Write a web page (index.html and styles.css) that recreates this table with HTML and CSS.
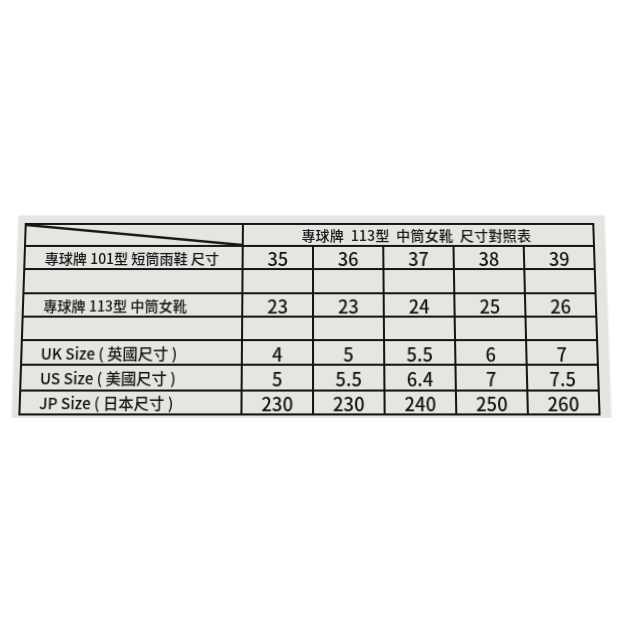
FILE: index.html
```html
<!DOCTYPE html>
<html lang="zh-Hant">
<head>
<meta charset="utf-8">
<title>尺寸對照表</title>
<link rel="stylesheet" href="styles.css">
</head>
<body>
<div class="page">
  <div class="paper">
    <div class="chart">
      <div class="cell corner">
        <svg class="diag" viewBox="0 0 100 100" preserveAspectRatio="none"><line x1="0" y1="0" x2="100" y2="100" stroke="#151515" stroke-width="2.4" vector-effect="non-scaling-stroke"/></svg>
      </div>
      <div class="cell title">專球牌&nbsp; 113型&nbsp; 中筒女靴&nbsp; 尺寸對照表</div>

      <div class="cell label">專球牌 101型 短筒雨鞋 尺寸</div>
      <div class="cell num">35</div><div class="cell num">36</div><div class="cell num">37</div><div class="cell num">38</div><div class="cell num">39</div>

      <div class="cell label"></div>
      <div class="cell num"></div><div class="cell num"></div><div class="cell num"></div><div class="cell num"></div><div class="cell num"></div>

      <div class="cell label">專球牌 113型 中筒女靴</div>
      <div class="cell num">23</div><div class="cell num">23</div><div class="cell num">24</div><div class="cell num">25</div><div class="cell num">26</div>

      <div class="cell label"></div>
      <div class="cell num"></div><div class="cell num"></div><div class="cell num"></div><div class="cell num"></div><div class="cell num"></div>

      <div class="cell label size">UK Size ( 英國尺寸 )</div>
      <div class="cell num">4</div><div class="cell num">5</div><div class="cell num">5.5</div><div class="cell num">6</div><div class="cell num">7</div>

      <div class="cell label size">US Size ( 美國尺寸 )</div>
      <div class="cell num">5</div><div class="cell num">5.5</div><div class="cell num">6.4</div><div class="cell num">7</div><div class="cell num">7.5</div>

      <div class="cell label size">JP Size ( 日本尺寸 )</div>
      <div class="cell num">230</div><div class="cell num">230</div><div class="cell num">240</div><div class="cell num">250</div><div class="cell num">260</div>
    </div>
  </div>
</div>
</body>
</html>
```
FILE: styles.css
```css
html, body {
  margin: 0;
  padding: 0;
  background: #ffffff;
}

body {
  font-family: "Noto Sans CJK TC", "Noto Sans", sans-serif;
  color: #141414;
}

.page {
  padding: 216px 0 0 19px;
}

.paper {
  width: 585px;
  height: 202px;
  box-sizing: border-box;
  padding: 7px 0 0 6px;
  background: #e6e4e1;
  box-shadow: 0 0 2px rgba(0, 0, 0, 0.18);
  transform: perspective(900px) rotateX(6deg);
  transform-origin: 50% 0;
}

.chart {
  display: grid;
  grid-template-columns: 215px repeat(5, 68px);
  grid-template-rows: 20px 21px 22px 21px 21px 22px 23px 21px;
  gap: 2px;
  padding: 2px;
  width: max-content;
  background: #151515;
}

.cell {
  background: #e7e5e2;
  display: flex;
  align-items: center;
  line-height: 1;
}

.corner {
  position: relative;
}

.diag {
  position: absolute;
  left: 0;
  top: 0;
  width: 100%;
  height: 100%;
}

.title {
  grid-column: 2 / span 5;
  justify-content: center;
  font-size: 14px;
  font-weight: 500;
  letter-spacing: 0.2px;
  padding-right: 4px;
}

.label {
  font-size: 14px;
  font-weight: 500;
  padding-left: 19px;
}

.label.size {
  font-size: 15px;
  padding-left: 18px;
}

.num {
  justify-content: center;
  font-size: 18px;
  font-weight: 500;
  padding-top: 1px;
}
```
